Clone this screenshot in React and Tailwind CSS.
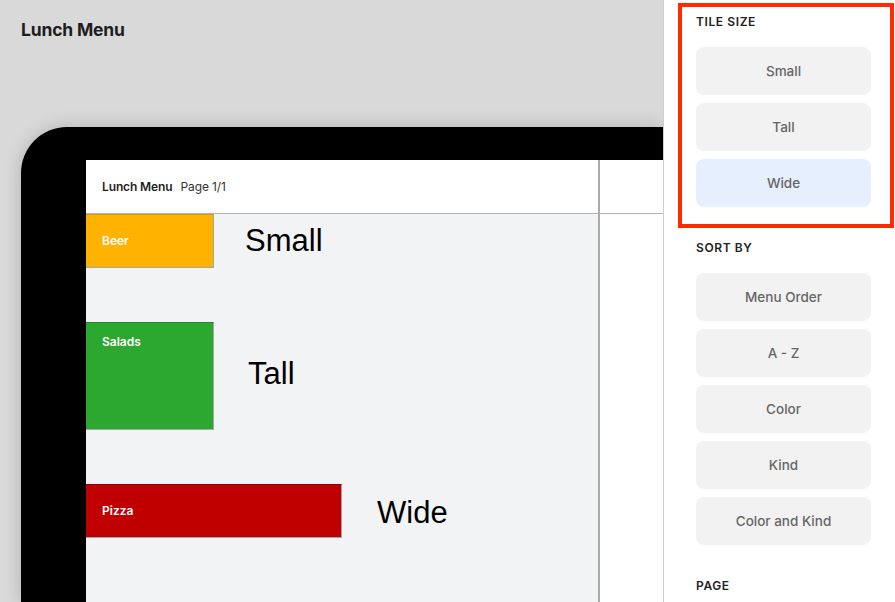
const tileSizes = [
  { label: 'Small', active: false },
  { label: 'Tall', active: false },
  { label: 'Wide', active: true },
];

const sortOptions = ['Menu Order', 'A - Z', 'Color', 'Kind', 'Color and Kind'];

const OptionButton = ({ label, active }) => (
  <button
    className={`h-[48px] w-[175px] rounded-[8px] pt-[1px] text-[13.5px] font-medium text-[#666] ${active ? 'bg-[#e6effd]' : 'bg-[#f2f2f2]'}`}
  >
    {label}
  </button>
);

const SectionLabel = ({ children }) => (
  <h3 className="text-[12px] font-semibold leading-[16px] tracking-[0.05em] text-[#222]">{children}</h3>
);

const Screen = () => (
  <div className="flex flex-1 bg-white">
    <div className="flex w-[514px] flex-col border-r-[2px] border-[#ababab]">
      <div className="flex h-[54px] items-center gap-[8px] border-b border-[#b4b4b4] pl-[16px] text-[12px] tracking-[-0.01em]">
        <span className="font-semibold text-[#1f1f1f]">Lunch Menu</span>
        <span className="text-[#333]">Page 1/1</span>
      </div>
      <div className="flex flex-1 flex-col gap-[54px] bg-[#f2f3f5] font-['Liberation_Sans',Arial,sans-serif]">
        <div className="flex items-center">
          <div className="flex h-[54px] w-[128px] items-center border-t border-r border-b border-t-[#d99a00] border-r-[#a6a6a6] border-b-[#a6a6a6] bg-[#ffb300] pl-[16px] font-['Inter',sans-serif] text-[12px] font-semibold text-white">
            Beer
          </div>
          <span className="ml-[31px] mt-[1px] text-[31px] text-black">Small</span>
        </div>
        <div className="flex items-center">
          <div className="flex h-[108px] w-[128px] items-start border-t border-r border-b border-t-[#238a27] border-r-[#a6a6a6] border-b-[#a6a6a6] bg-[#2ca831] pl-[16px] pt-[10px] font-['Inter',sans-serif] text-[12px] font-semibold text-white">
            Salads
          </div>
          <span className="ml-[34px] mb-[4px] text-[31px] text-black">Tall</span>
        </div>
        <div className="flex items-center">
          <div className="flex h-[54px] w-[256px] items-center border-t border-r border-b border-t-[#9a0000] border-r-[#a6a6a6] border-b-[#a6a6a6] bg-[#c00000] pl-[16px] font-['Inter',sans-serif] text-[12px] font-semibold text-white">
            Pizza
          </div>
          <span className="ml-[35px] mt-[4px] text-[31px] text-black">Wide</span>
        </div>
      </div>
    </div>
    <div className="flex flex-1 flex-col">
      <div className="h-[54px] border-b border-[#b4b4b4]" />
      <div className="flex-1 bg-white" />
    </div>
  </div>
);

export default function App() {
  return (
    <div className="flex h-[602px] w-[895px] overflow-hidden font-['Inter',sans-serif]">
      <div className="flex w-[663px] flex-col overflow-hidden bg-[#d9d9d9]">
        <h1 className="pl-[21px] pt-[19px] text-[17.5px] font-bold leading-[22px] tracking-[-0.01em] text-[#1e1e1e]">
          Lunch Menu
        </h1>
        <div className="ml-[21px] mt-[86px] flex flex-1 rounded-tl-[46px] bg-black pl-[65px] pt-[33px] shadow-[0_0_18px_rgba(0,0,0,0.18)]">
          <Screen />
        </div>
      </div>

      <aside className="relative flex flex-1 flex-col border-l border-[#cfcfcf] bg-white pl-[32px] pt-[14px]">
        <div className="pointer-events-none absolute left-[14px] top-[3px] h-[225px] w-[216px] border-[4px] border-[#ff2a00]" />
        <SectionLabel>TILE SIZE</SectionLabel>
        <div className="mt-[17px] flex flex-col gap-[8px]">
          {tileSizes.map((t) => (
            <OptionButton key={t.label} label={t.label} active={t.active} />
          ))}
        </div>
        <div className="mt-[33px]">
          <SectionLabel>SORT BY</SectionLabel>
        </div>
        <div className="mt-[17px] flex flex-col gap-[8px]">
          {sortOptions.map((s) => (
            <OptionButton key={s} label={s} />
          ))}
        </div>
        <div className="mt-[33px]">
          <SectionLabel>PAGE</SectionLabel>
        </div>
      </aside>
    </div>
  );
}
